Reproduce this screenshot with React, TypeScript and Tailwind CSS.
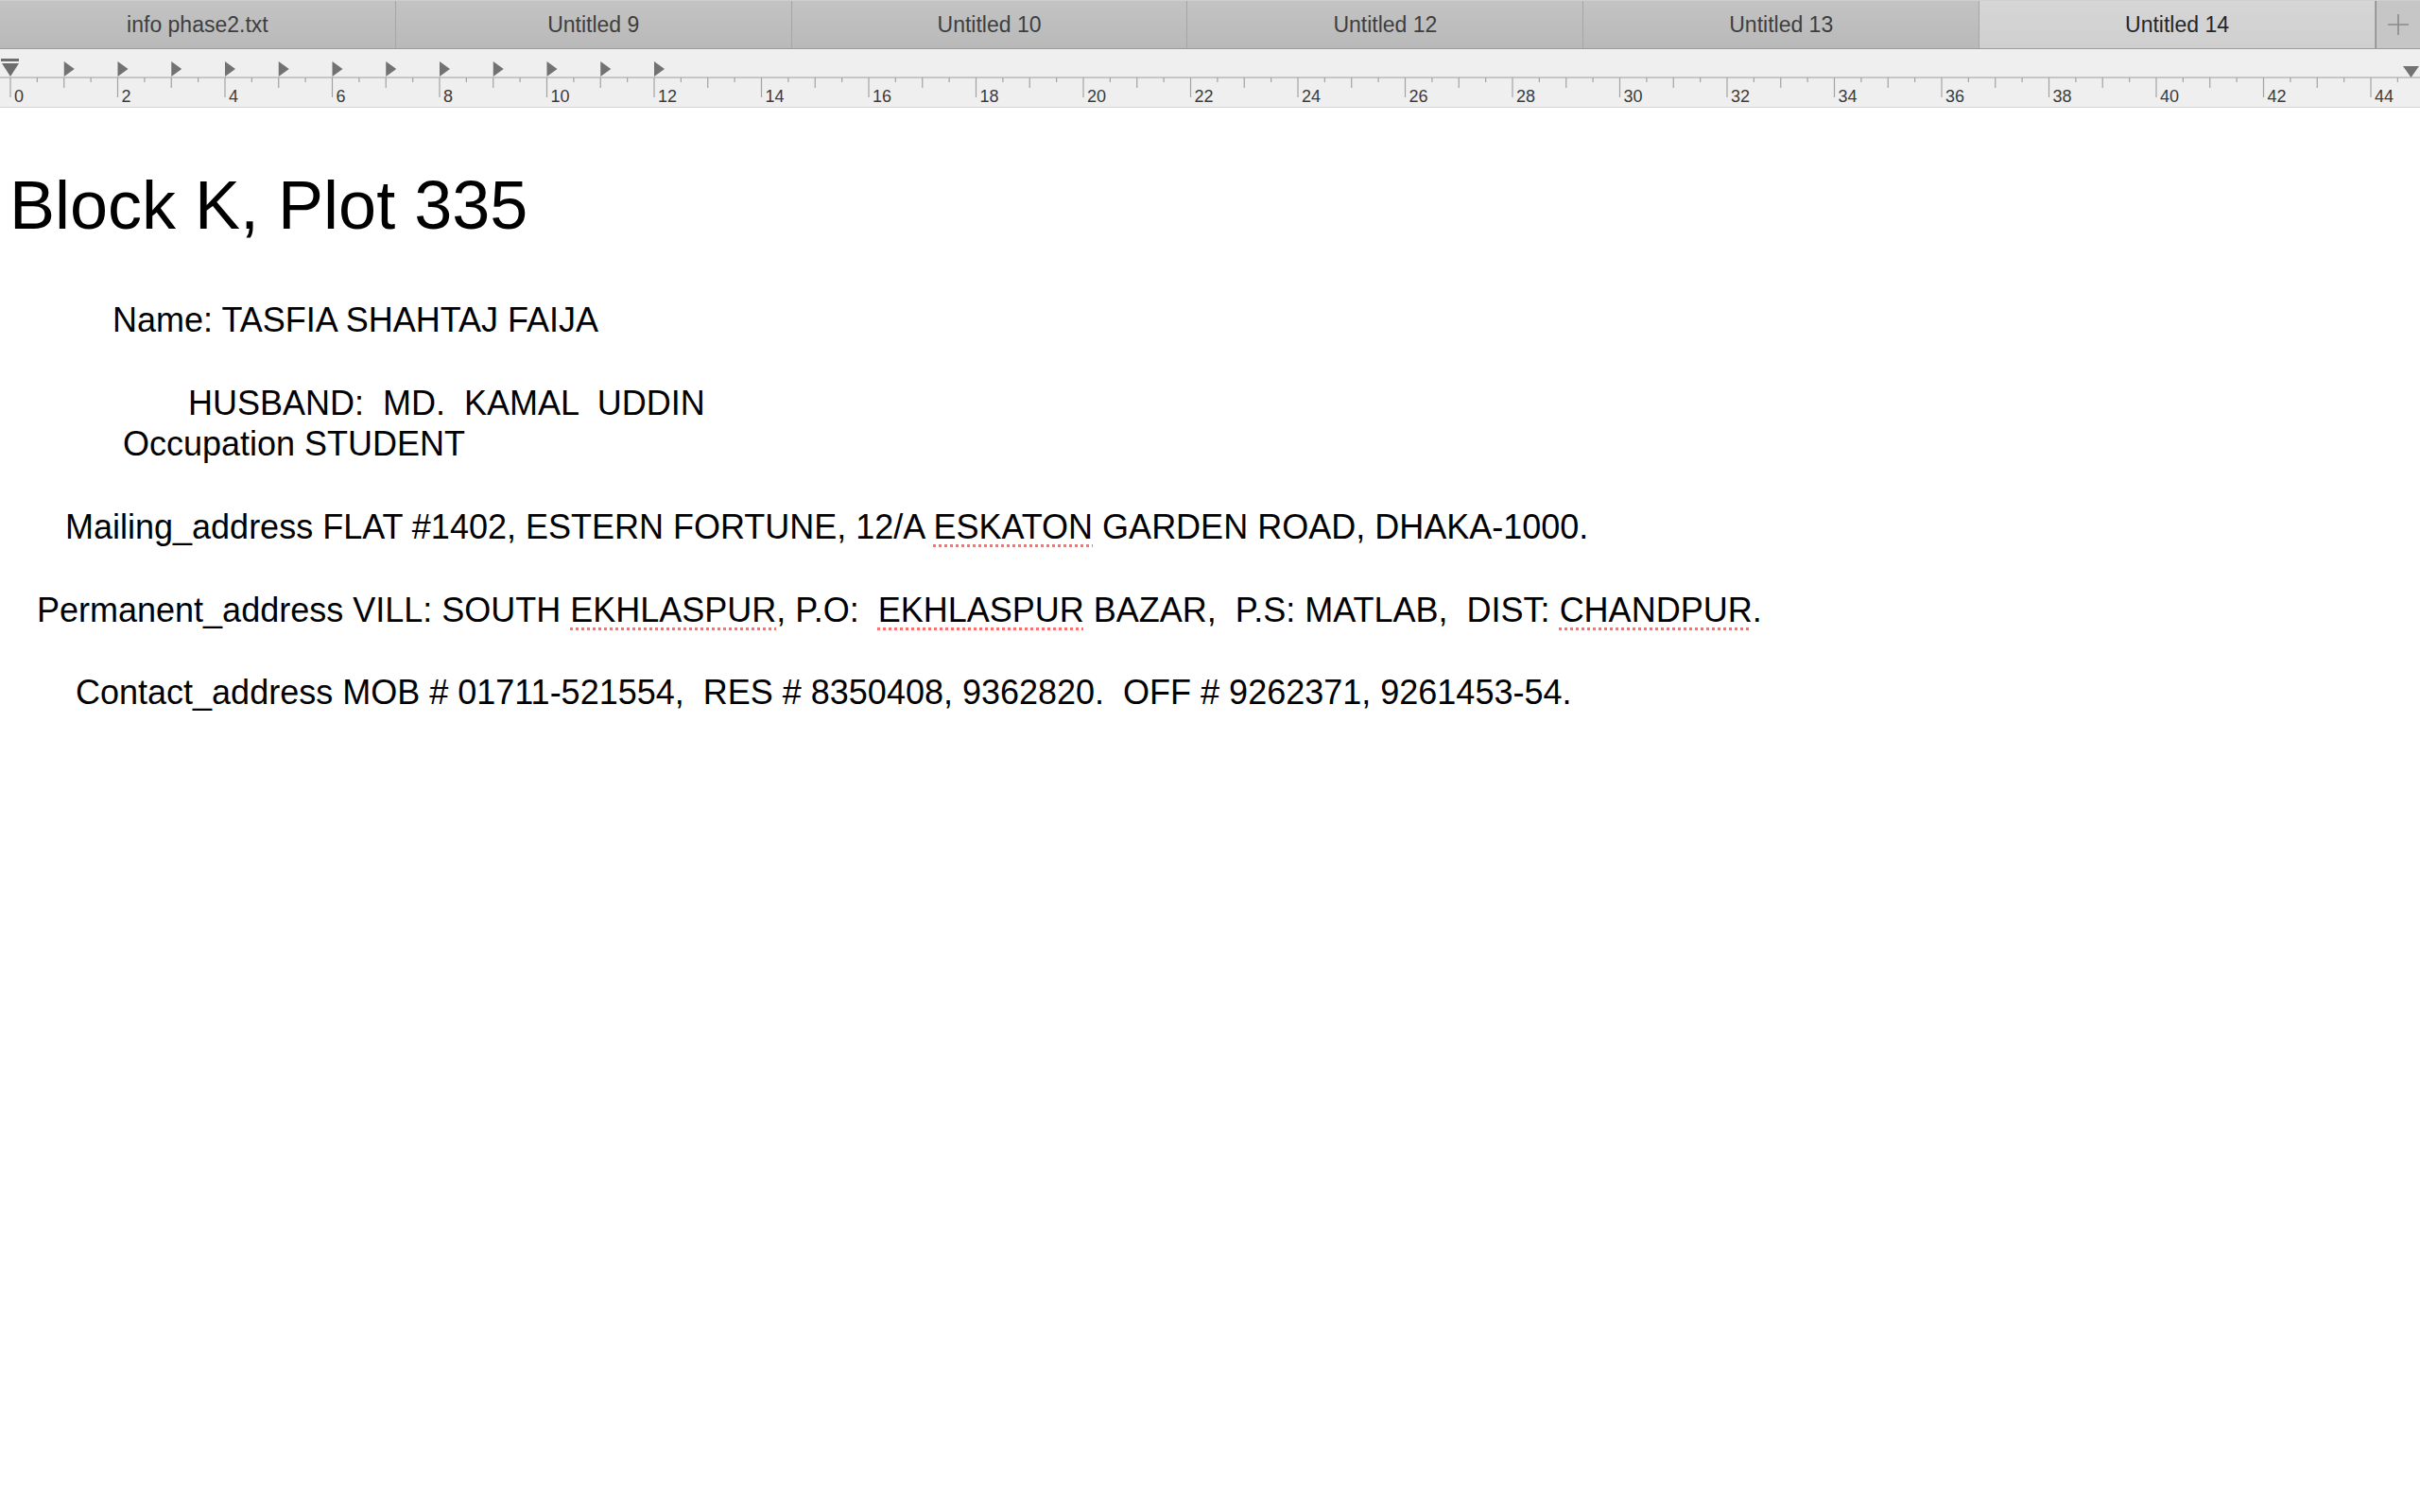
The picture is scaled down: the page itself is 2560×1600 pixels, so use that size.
import React from 'react';

const TABS = ['info phase2.txt', 'Untitled 9', 'Untitled 10', 'Untitled 12', 'Untitled 13', 'Untitled 14'];
const ACTIVE_TAB = 5;

// ruler geometry (px)
const ORIGIN = 11;
const UNIT = 56.75;

const Ruler: React.FC = () => {
  const ticks: React.ReactNode[] = [];
  for (let i = 0; i <= 89; i++) {
    const x = ORIGIN + (i * UNIT) / 2;
    if (x > 2558) break;
    const whole = i % 2 === 0;
    const unit = i / 2;
    const labeled = whole && unit % 2 === 0;
    const len = labeled ? 21 : whole ? 11 : 5;
    ticks.push(<line key={'t' + i} x1={x} x2={x} y1={30} y2={30 + len} stroke="#a3a3a3" strokeWidth={1.2} />);
    if (labeled) {
      ticks.push(
        <text key={'l' + i} x={x + 4} y={56} fontSize={18} fill="#3b3b3b" fontFamily="'Liberation Sans', Arial, sans-serif">
          {unit}
        </text>
      );
    }
  }

  const stops = Array.from({ length: 12 }, (_, k) => ORIGIN + (k + 1) * UNIT);

  return (
    <div className="h-[62px] bg-[#efefef] border-b border-[#d4d4d4]">
      <svg width="2560" height="61" viewBox="0 0 2560 61" className="block">
        <line x1={0} x2={2560} y1={30} y2={30} stroke="#b9b9b9" strokeWidth={1.6} />
        {ticks}
        {/* left indent marker */}
        <rect x={1} y={10} width={19} height={3} fill="#6d6d6d" />
        <polygon points="2,15 20,15 11,29" fill="#6d6d6d" />
        {/* tab stops */}
        {stops.map((x, k) => (
          <polygon key={k} points={`${x},13 ${x + 11},21 ${x},29`} fill="#727272" />
        ))}
        {/* right margin marker */}
        <polygon points="2542,18 2559,18 2550.5,30" fill="#727272" />
      </svg>
    </div>
  );
};

const Spell: React.FC<{ children: React.ReactNode }> = ({ children }) => (
  <span className="underline decoration-dotted decoration-[#f57373] decoration-[3px] underline-offset-[6px]">{children}</span>
);

const App: React.FC = () => {
  return (
    <div className="min-h-screen w-full bg-white font-['Liberation_Sans',Arial,sans-serif] text-black">
      {/* Tab bar */}
      <div className="flex h-[52px] border-b border-[#9c9c9c] bg-gradient-to-b from-[#c3c3c3] to-[#b9b9b9] border-t border-t-[#cfcfcf]">
        {TABS.map((t, i) => (
          <div
            key={t}
            className={`flex flex-1 items-center justify-center border-r border-[#a6a6a6] pt-[1px] text-[23px] ${
              i === ACTIVE_TAB ? 'bg-gradient-to-b from-[#d6d6d6] to-[#cfcfcf] text-[#262626]' : 'text-[#3e3e3e]'
            }`}
          >
            {t}
          </div>
        ))}
        <div className="flex w-[47px] items-center justify-center border-l border-[#8f8f8f] bg-[#c6c6c6]">
          <svg width="22" height="22" viewBox="0 0 22 22">
            <path d="M11 0v22M0 11h22" stroke="#8a8a8a" strokeWidth="1.6" />
          </svg>
        </div>
      </div>

      <Ruler />

      {/* Document */}
      <div className="pl-[10px] pt-[62px]">
        <h1 className="text-[72px] leading-[82px] font-normal">Block K, Plot 335</h1>
        <div className="mt-[59px] text-[36px] leading-[43.8px] whitespace-pre">
          <div className="pl-[109px]">Name: TASFIA SHAHTAJ FAIJA</div>
          <div>&nbsp;</div>
          <div className="pl-[189px]">HUSBAND:  MD.  KAMAL  UDDIN</div>
          <div className="pl-[120px]">Occupation STUDENT</div>
          <div>&nbsp;</div>
          <div className="pl-[59px]">
            Mailing_address FLAT #1402, ESTERN FORTUNE, 12/A <Spell>ESKATON</Spell> GARDEN ROAD, DHAKA-1000.
          </div>
          <div>&nbsp;</div>
          <div className="pl-[29px]">
            Permanent_address VILL: SOUTH <Spell>EKHLASPUR</Spell>, P.O:  <Spell>EKHLASPUR</Spell> BAZAR,  P.S: MATLAB,  DIST: <Spell>CHANDPUR</Spell>.
          </div>
          <div>&nbsp;</div>
          <div className="pl-[70px]">Contact_address MOB # 01711-521554,  RES # 8350408, 9362820.  OFF # 9262371, 9261453-54.</div>
        </div>
      </div>
    </div>
  );
};

export default App;
